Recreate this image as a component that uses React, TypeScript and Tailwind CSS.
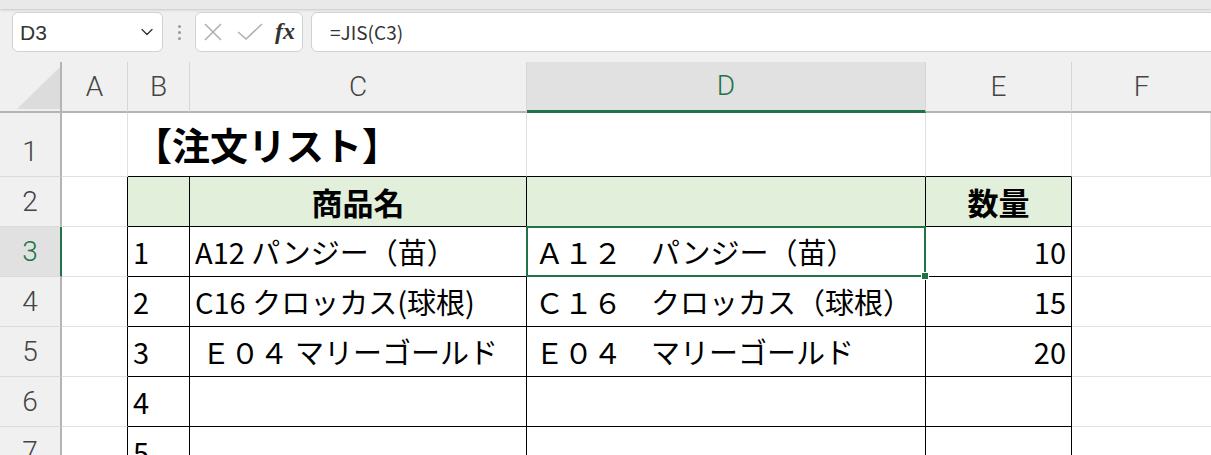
import React from 'react';
import { ChevronDown } from 'lucide-react';

const JP = "font-['Noto_Sans_CJK_JP',sans-serif]";
const HEAD = "font-['Roboto','Liberation_Sans',sans-serif] font-light text-[28px] text-[#444]";

const GRID = 'border-[#e1e1e1]';

type Row = { no: string; c: string; d: string; e: string };

const rows: Row[] = [
    { no: '1', c: 'A12 パンジー（苗）', d: 'Ａ１２　パンジー（苗）', e: '10' },
    { no: '2', c: 'C16 クロッカス(球根)', d: 'Ｃ１６　クロッカス（球根）', e: '15' },
    { no: '3', c: ' Ｅ０４ マリーゴールド', d: 'Ｅ０４　マリーゴールド', e: '20' },
    { no: '4', c: '', d: '', e: '' },
    { no: '5', c: '', d: '', e: '' },
];

const FormulaBar = () => (
    <div className="bg-[#f0f0f0]">
        <div className="h-[9px] bg-[#e9e9e9] shadow-[0_1px_3px_rgba(0,0,0,0.18)]" />
        <div className="flex items-center h-[53px] pb-[10px] pt-[3px]">
            <div className="ml-[12px] w-[151px] h-[40px] rounded-[6px] border border-[#d1d1d1] bg-white flex items-center justify-between pl-[7px] pr-[5px]">
                <span className="font-['Liberation_Sans',sans-serif] text-[21px] text-[#333] mt-[2px]">D3</span>
                <ChevronDown size={20} strokeWidth={1.6} className="text-[#333]" />
            </div>
            <div className="w-[32px] flex flex-col items-center gap-[3px]">
                <span className="w-[3px] h-[3px] rounded-full bg-[#9a9a9a]" />
                <span className="w-[3px] h-[3px] rounded-full bg-[#9a9a9a]" />
                <span className="w-[3px] h-[3px] rounded-full bg-[#9a9a9a]" />
            </div>
            <div className="w-[108px] h-[40px] rounded-[6px] border border-[#d1d1d1] bg-white flex items-center pl-[7px]">
                <svg width="20" height="20" viewBox="0 0 20 20" className="mr-[14px]">
                    <path d="M2 2 L18 18 M18 2 L2 18" stroke="#b0b0b0" strokeWidth="1.6" fill="none" />
                </svg>
                <svg width="26" height="18" viewBox="0 0 26 18" className="mr-[12px]">
                    <path d="M1 9 L9 16 L25 1" stroke="#b0b0b0" strokeWidth="1.6" fill="none" />
                </svg>
                <span className="font-['Liberation_Serif',serif] italic font-bold text-[24px] leading-none text-[#333] -mt-[2px]">fx</span>
            </div>
            <div className="ml-[8px] flex-1 -mr-[10px] h-[40px] rounded-l-[6px] border border-[#d1d1d1] bg-white flex items-center pl-[18px]">
                <span className={`${JP} text-[19px] text-[#333]`}>=JIS(C3)</span>
            </div>
        </div>
    </div>
);

const ColHead = ({ label, active, last }: { label: string; active?: boolean; last?: boolean }) => (
    <div
        className={`flex items-center justify-center border-b-2 ${last ? '' : 'border-r border-r-[#d6d6d6]'} ${
            active ? 'bg-[#e1e1e1] border-b-[#217346] border-b-[3px] text-[#217346]' : 'border-b-[#b4b4b4]'
        }`}
    >
        <span className={`${HEAD} ${active ? 'text-[#217346]' : ''}`}>{label}</span>
    </div>
);

const RowHead = ({ label, active }: { label: string; active?: boolean }) => (
    <div
        className={`flex items-end justify-center pb-[10px] border-b border-b-[#dadada] ${
            active ? 'bg-[#e1e1e1] border-r-2 border-r-[#217346]' : 'bg-[#f0f0f0] border-r-2 border-r-[#b4b4b4]'
        }`}
    >
        <span className={`${HEAD} leading-none ${active ? 'text-[#217346]' : ''}`}>{label}</span>
    </div>
);

export default function App() {
    return (
        <div className="w-[1211px] h-[455px] overflow-hidden bg-white">
            <FormulaBar />
            <div className={`grid grid-cols-[62px_66px_62px_337px_399px_146px_1fr] grid-rows-[51px_64px_50px_50px_50px_50px_50px_50px] ${JP} text-[29px] text-black`}>
                {/* header row */}
                <div className="flex items-end justify-end bg-[#f0f0f0] border-b-2 border-b-[#b4b4b4] border-r-2 border-r-[#b4b4b4] pb-[2px]">
                    <svg width="43" height="42" viewBox="0 0 43 42">
                        <polygon points="43,0 43,42 0,42" fill="#dcdcdc" />
                    </svg>
                </div>
                <div className="bg-[#f0f0f0] grid grid-cols-[66px_62px_337px_399px_146px_1fr] col-span-6">
                    <ColHead label="A" />
                    <ColHead label="B" />
                    <ColHead label="C" />
                    <ColHead label="D" active />
                    <ColHead label="E" />
                    <ColHead label="F" last />
                </div>

                {/* row 1 */}
                <RowHead label="1" />
                <div className={`border-r border-b ${GRID}`} />
                <div className={`col-span-2 border-b border-b-black border-r ${GRID} flex items-end pb-[13px] pl-[6px]`}>
                    <span className="font-bold text-[38px] leading-none">【注文リスト】</span>
                </div>
                <div className={`border-r ${GRID} border-b border-b-black`} />
                <div className={`border-r ${GRID} border-b border-b-black`} />
                <div className={`border-r border-b ${GRID}`} />

                {/* row 2 */}
                <RowHead label="2" />
                <div className={`border-b ${GRID} border-r border-r-black`} />
                <div className="bg-[#e2efda] border-r border-b border-black" />
                <div className="bg-[#e2efda] border-r border-b border-black flex items-center justify-center">
                    <span className="font-bold text-[31px] leading-none">商品名</span>
                </div>
                <div className="bg-[#e2efda] border-r border-b border-black" />
                <div className="bg-[#e2efda] border-r border-b border-black flex items-center justify-center">
                    <span className="font-bold text-[31px] leading-none">数量</span>
                </div>
                <div className={`border-b ${GRID}`} />

                {rows.map((r, i) => (
                    <React.Fragment key={r.no}>
                        <RowHead label={String(i + 3)} active={i === 0} />
                        <div className={`border-b ${GRID} border-r border-r-black`} />
                        <div className="border-r border-b border-black flex items-center pl-[5px]">
                            <span className="leading-none">{r.no}</span>
                        </div>
                        <div className="border-r border-b border-black flex items-center pl-[5px] whitespace-pre">
                            <span className="leading-none">{r.c}</span>
                        </div>
                        <div className="relative border-r border-b border-black flex items-center pl-[8px] whitespace-pre">
                            <span className="leading-none">{r.d}</span>
                            {i === 0 && (
                                <div className="absolute -left-[1px] -top-[1px] -right-[1px] -bottom-[1px] border-2 border-[#217346] z-10">
                                    <span className="absolute -right-[5px] -bottom-[5px] w-[8px] h-[8px] bg-[#217346] border border-white" />
                                </div>
                            )}
                        </div>
                        <div className="border-r border-b border-black flex items-center justify-end pr-[5px]">
                            <span className="leading-none">{r.e}</span>
                        </div>
                        <div className={`border-b ${GRID}`} />
                    </React.Fragment>
                ))}
            </div>
        </div>
    );
}
